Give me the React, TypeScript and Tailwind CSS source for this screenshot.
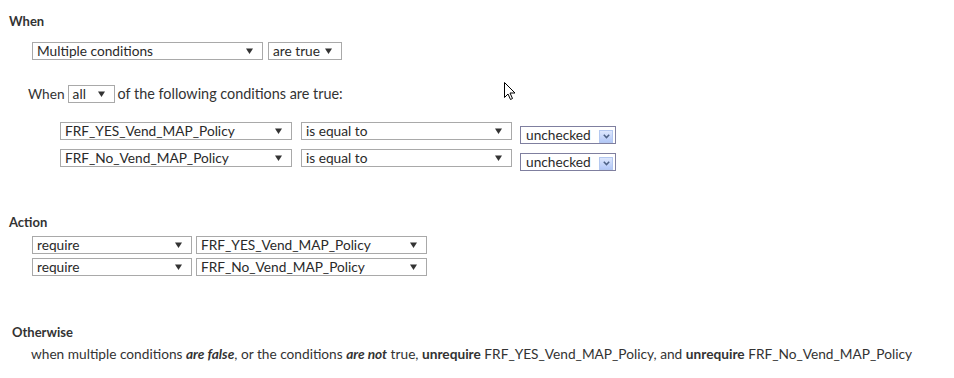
import React from "react";

const font = { fontFamily: "Lato, 'Noto Sans', Arial, sans-serif" };

function Tri() {
  return (
    <svg width="7" height="6" viewBox="0 0 7 6" className="shrink-0">
      <path d="M0 0.5 H7 L3.5 6 Z" fill="#333" />
    </svg>
  );
}

function Sel({ w, text }: { w: string; text: string }) {
  return (
    <div
      className={`${w} h-[18px] border border-[#a9a9a9] bg-white flex items-center justify-between pl-[4px] pr-[9px] text-[13.7px] leading-none text-[#2a2a2a]`}
    >
      <span className="whitespace-nowrap">{text}</span>
      <Tri />
    </div>
  );
}

function Unchecked() {
  return (
    <div className="w-[96px] h-[18px] mt-[4px] ml-[8px] border border-[#7f7f9f] bg-white flex items-center justify-between pl-[5px] pr-[2px] text-[13.7px] leading-none text-[#2a2a2a]">
      <span>unchecked</span>
      <div className="w-[14px] h-[13px] mt-[2px] border border-[#b4c8f0] bg-gradient-to-b from-[#dde7fd] to-[#b3c8f7] flex items-center justify-center">
        <svg width="7" height="5" viewBox="0 0 7 5">
          <path d="M0.8 0.8 L3.5 3.6 L6.2 0.8" fill="none" stroke="#4d6185" strokeWidth="1.5" />
        </svg>
      </div>
    </div>
  );
}

export default function App() {
  return (
    <div className="relative w-[954px] h-[378px] bg-white text-[#2a2a2a]" style={font}>
      <div className="pt-[13px] pl-[9px] text-[13px] leading-4 font-bold text-[#333]">When</div>
      <div className="mt-[13px] ml-[32px] flex gap-[5px]">
        <Sel w="w-[231px]" text="Multiple conditions" />
        <Sel w="w-[74px]" text="are true" />
      </div>
      <div className="mt-[25px] ml-[28px] h-[18px] flex items-center text-[13.7px] leading-none text-[#333]">
        <span>When</span>
        <div className="ml-[3px] mr-[3px]">
          <Sel w="w-[47px]" text="all" />
        </div>
        <span className="text-[14.4px] leading-none">of the following conditions are true:</span>
      </div>
      <div className="mt-[19px] ml-[60px] flex flex-col gap-[9px]">
        {["FRF_YES_Vend_MAP_Policy", "FRF_No_Vend_MAP_Policy"].map((f) => (
          <div key={f} className="flex items-start h-[18px]">
            <Sel w="w-[232px]" text={f} />
            <div className="ml-[9px]">
              <Sel w="w-[211px]" text="is equal to" />
            </div>
            <Unchecked />
          </div>
        ))}
      </div>
      <div className="mt-[47px] pl-[9px] text-[13px] leading-4 font-bold text-[#333]">Action</div>
      <div className="mt-[6px] ml-[32px] flex flex-col gap-[4px]">
        {["FRF_YES_Vend_MAP_Policy", "FRF_No_Vend_MAP_Policy"].map((f) => (
          <div key={f} className="flex gap-[4px]">
            <Sel w="w-[160px]" text="require" />
            <Sel w="w-[231px]" text={f} />
          </div>
        ))}
      </div>
      <div className="mt-[48px] pl-[12px] text-[13px] leading-4 font-bold text-[#333]">Otherwise</div>
      <div className="mt-[6px] pl-[31px] text-[13.7px] leading-4 text-[#333] whitespace-nowrap">
        when multiple conditions <b><i>are false</i></b>, or the conditions <b><i>are not</i></b> true,{" "}
        <b>unrequire</b> FRF_YES_Vend_MAP_Policy, and <b>unrequire</b> FRF_No_Vend_MAP_Policy
      </div>
      <svg className="absolute left-[504px] top-[82px]" width="12" height="19" viewBox="0 0 12 19">
        <path d="M0.5 0.5 V15.5 L4 12 L6.5 17.5 L8.5 16.5 L6 11 H11 Z" fill="white" stroke="#000" strokeWidth="1" />
      </svg>
    </div>
  );
}
